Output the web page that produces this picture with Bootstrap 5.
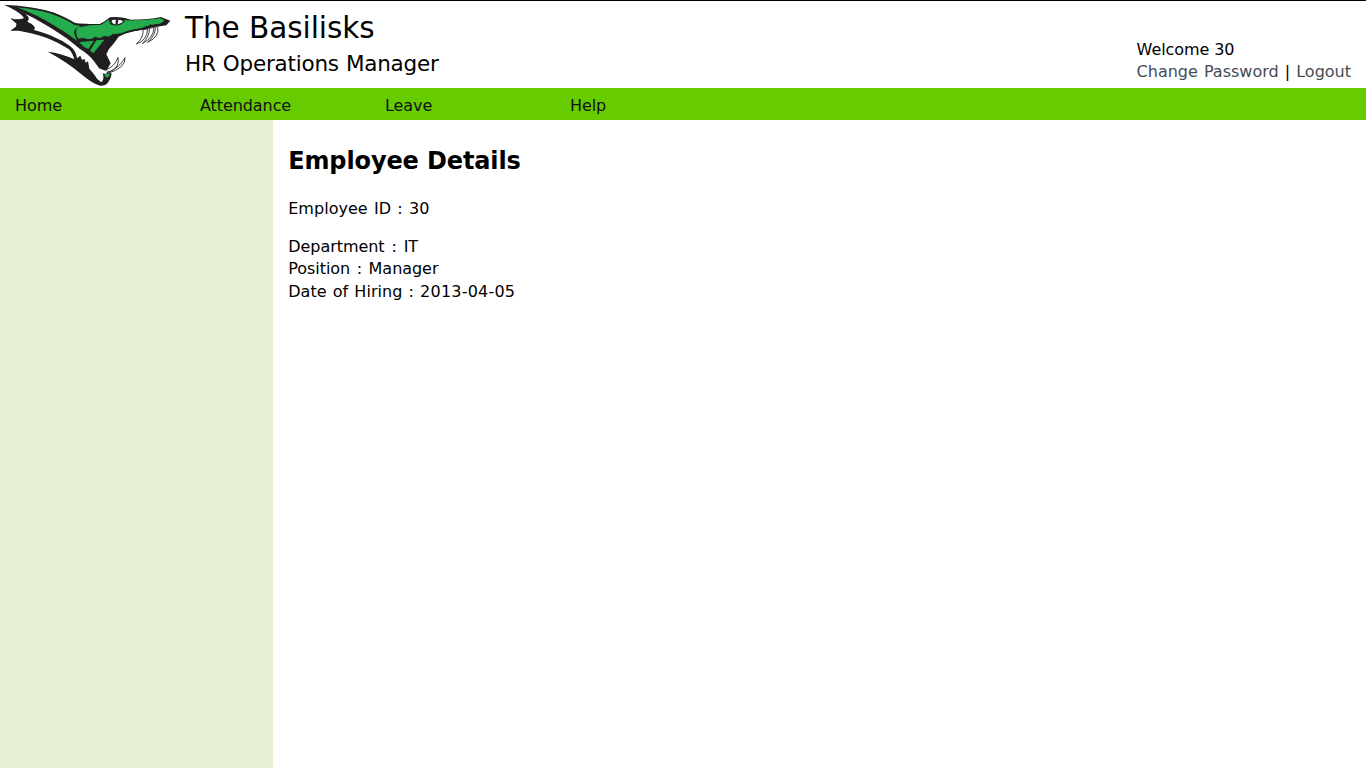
<!DOCTYPE html>
<html lang="en">
<head>
<meta charset="utf-8">
<meta name="viewport" content="width=device-width, initial-scale=1">
<title>The Basilisks</title>
<link href="https://cdn.jsdelivr.net/npm/bootstrap@5.3.0/dist/css/bootstrap.min.css" rel="stylesheet">
<style>
body{font-family:Verdana,"DejaVu Sans",sans-serif;font-size:16px;line-height:22.5px;color:#000;letter-spacing:-.08px}
.site-head{height:88px;border-top:1px solid #000}
.logo{width:185px;height:87px;flex:none}
.brand-name{font-size:29.5px;line-height:36px;font-weight:400;padding-top:9px;letter-spacing:-.05px}
.brand-sub{font-size:21.5px;line-height:36px;font-weight:400;letter-spacing:-.23px;word-spacing:.6px}
.account{padding:38px 15px 0 0;line-height:22px}
.account .links{letter-spacing:0;word-spacing:1px}
.account a{color:#444c55}
.main-menu{height:32px;background:#6c0}
.main-menu .nav-link{width:185px;padding:7px 15px 3px;line-height:22px;color:#111}
.side{width:20%;background:#e7f0d3}
.details{padding:26px 15px}
.details h1{font-size:24px;line-height:30px;font-weight:700;margin-bottom:22px;letter-spacing:-.12px}
.details p{margin-bottom:15px}
.f-id{letter-spacing:.04px;word-spacing:1.1px}
.f-dept{letter-spacing:-.04px;word-spacing:1.8px}
.f-pos{letter-spacing:-.04px;word-spacing:1.5px}
.f-date{letter-spacing:.04px;word-spacing:1px}
.f-date span{letter-spacing:.22px}
</style>
</head>
<body class="d-flex flex-column vh-100 overflow-hidden bg-white">
<header class="site-head d-flex flex-shrink-0">
<svg class="logo" viewBox="0 3 555 261" role="img" aria-label="Basilisk">
<path fill="#211e1f" d="M12 14Q102 18 163 38Q200 53 224 68Q233 71 299 72L314 64L330 52Q352 50 374 54L393 59Q448 59 482 51L511 62L499 76L442 85L409 92Q371 100 356 110Q344 128 327 147L319 163L332 190L319 213L335 221Q332 239 320 252Q307 261 292 254Q272 246 246 224Q200 185 143 155Q185 160 223 178Q217 157 207 148Q178 129 143 115Q101 100 75 96Q52 91 32 92L48 80L50 71L31 55Q56 64 74 57Q67 39 12 14Z"/>
<path fill="#24ad4c" d="M50 22Q114 28 155 42Q199 58 222 74L243 78Q224 83 222 98L231 122Q195 95 150 69Q105 42 50 22Z"/>
<path fill="#24ad4c" stroke="#24ad4c" stroke-width="3" d="M232 84Q270 75 303 76L326 61L334 75L362 75L373 62L397 63Q455 61 481 56L492 62L481 69Q440 74 424 83Q387 87 365 98L337 101Q330 112 312 106Q303 117 286 109Q271 121 249 112L235 115Q226 97 232 84Z"/>
<path fill="#fff" d="M35 27Q60 34 100 53Q155 83 200 115L240 147Q269 165 282 184Q297 204 309 222Q313 239 304 247L292 237Q280 219 268 206L264 184L257 188L253 176L246 180L241 167L231 175Q228 153 211 139Q186 120 154 107Q122 95 102 90Q108 77 82 65Q95 51 66 36Z"/>
<path fill="#211e1f" d="M30 22Q57 29 73 40Q90 53 84 62Q71 69 32 55Q59 61 72 54Q67 38 30 22ZM34 57Q62 67 78 65Q99 71 105 83Q103 91 91 94Q57 88 32 92L48 80L51 71Z"/>
<path fill="#fff" d="M335 61Q349 56 369 62Q367 73 345 73Q334 70 335 61Z"/>
<path fill="none" stroke="#211e1f" stroke-width="3" d="M328 66Q335 55 350 57Q366 57 373 64Q365 74 349 75Q336 76 328 69"/>
<path fill="#211e1f" d="M348 57L355 59L353 73L346 71Z"/>
<path fill="#24ad4c" d="M239 126L282 122L265 147Q246 140 239 126ZM289 121L313 119L280 160L270 152Z"/>
<path fill="#fff" stroke="#211e1f" stroke-width="2.5" d="M429 89Q432 112 409 132Q441 122 443 87ZM448 85Q450 108 427 131Q461 114 462 82ZM466 81Q468 104 443 127Q480 110 473 79ZM315 211Q345 200 354 172Q361 201 329 216ZM326 216Q360 202 375 173Q378 203 322 221Z"/>
<path fill="#fff" d="M296 205Q312 211 323 214L318 222L306 220Z"/>
<path fill="#24ad4c" d="M312 225L325 220L330 226L321 233Z"/>
<path fill="none" stroke="#211e1f" stroke-width="4" d="M407 91L450 83M452 73L450 84"/>
</svg>
<div class="flex-grow-1">
<h1 class="brand-name mb-0">The Basilisks</h1>
<h2 class="brand-sub mb-0">HR Operations Manager</h2>
</div>
<div class="account">
<div>Welcome 30</div>
<div class="links"><a href="#" class="text-decoration-none">Change Password</a> | <a href="#" class="text-decoration-none">Logout</a></div>
</div>
</header>
<nav class="main-menu nav flex-shrink-0">
<a class="nav-link" href="#">Home</a>
<a class="nav-link" href="#">Attendance</a>
<a class="nav-link" href="#">Leave</a>
<a class="nav-link" href="#">Help</a>
</nav>
<div class="d-flex flex-grow-1">
<aside class="side flex-shrink-0"></aside>
<main class="details flex-grow-1">
<h1>Employee Details</h1>
<p class="f-id">Employee ID : 30</p>
<div class="f-dept">Department : IT</div>
<div class="f-pos">Position : Manager</div>
<div class="f-date">Date of Hiring : <span>2013-04-05</span></div>
</main>
</div>
<script src="https://cdn.jsdelivr.net/npm/bootstrap@5.3.0/dist/js/bootstrap.bundle.min.js"></script>
</body>
</html>
